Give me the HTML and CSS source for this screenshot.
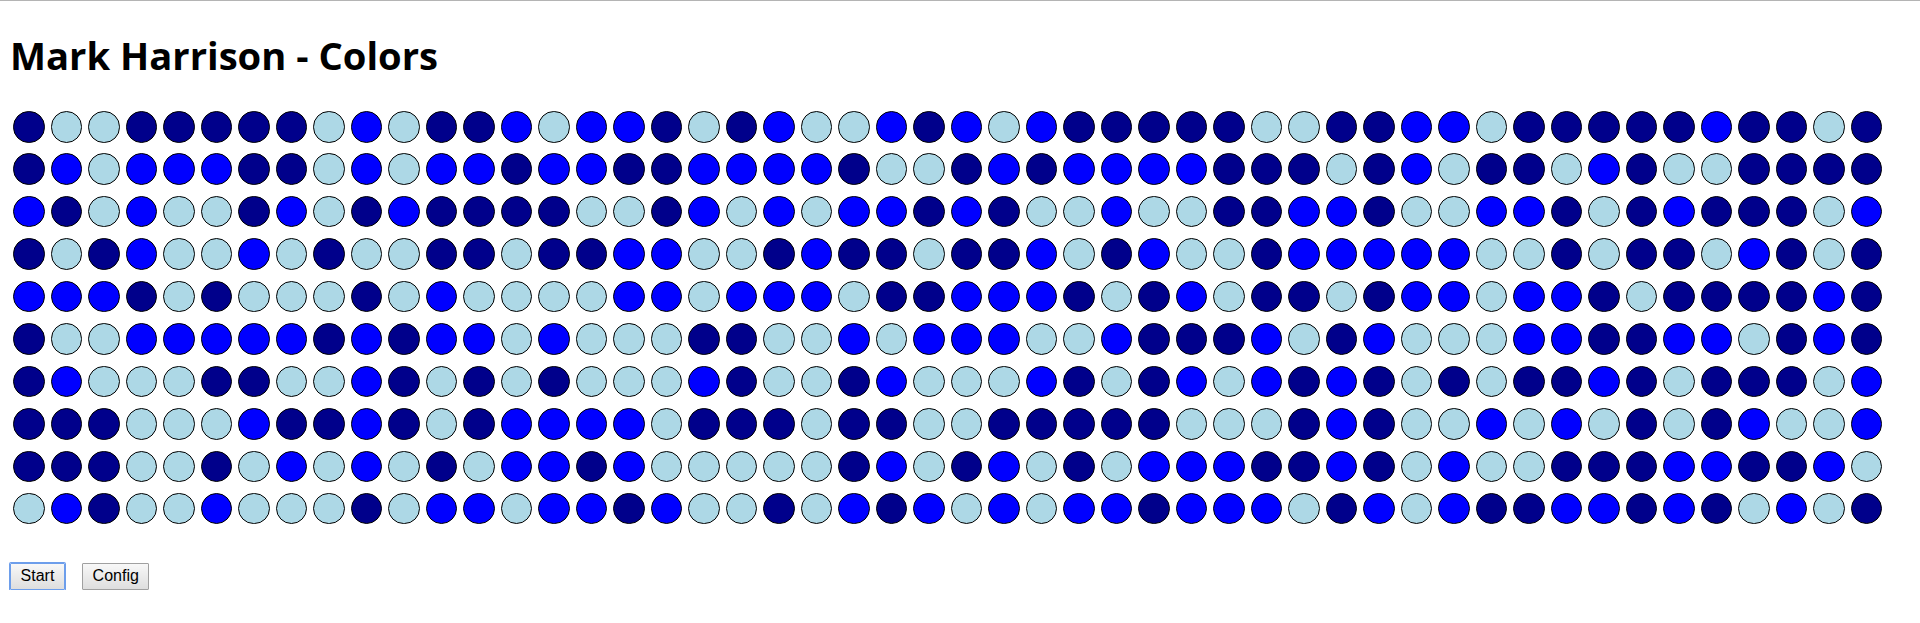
FILE: index.html
```html
<!DOCTYPE html>
<html lang="en">
<head>
    <meta charset="UTF-8">
    <title>Mark Harrison - Colors</title>
    <link rel="stylesheet" href="styles.css">
</head>
<body>
    <h1 class="title">Mark Harrison - Colors</h1>
    <div id="board" class="board"></div>
    <div class="controls">
        <button class="btn btn-focus">Start</button>
        <button class="btn">Config</button>
    </div>
    <script src="script.js"></script>
</body>
</html>
```

FILE: styles.css
```css
/* page */
body {
    margin: 0;
    border-top: 1px solid #b4b4b4;
    background: #fff;
    color: #000;
    font-family: "Open Sans", sans-serif;
}
.title {
    margin: 0;
    padding: 28px 0 0 10px;
    font-size: 38.2px;
    line-height: 52px;
    font-weight: 700;
}
/* grid of dots */
.board {
    display: grid;
    grid-template-columns: repeat(50, 37.5px);
    grid-auto-rows: 42.45px;
    padding: 30px 0 0 13px;
}
.dot {
    width: 31.5px;
    height: 31.5px;
    box-sizing: border-box;
    border: 1px solid #000;
    border-radius: 50%;
}
.navy { background: #00008b; }
.blue { background: #00f; }
.light { background: #add8e6; }
/* buttons */
.controls {
    display: flex;
    gap: 17px;
    padding: 27.5px 0 0 10px;
}
.btn {
    height: 27px;
    padding: 0 9.6px;
    border: 1px solid #a0a0a0;
    border-radius: 1px;
    background: linear-gradient(#f8f8f8, #dedede);
    color: #000;
    font-family: "Liberation Sans", Arial, sans-serif;
    font-size: 16px;
}
.btn-focus {
    border-color: #6d9eeb;
    box-shadow: 0 0 0 1px #6d9eeb;
}
```

FILE: script.js
```js
// one string per row: D = navy, B = blue, L = light
var rows = [
    "DLLDDDDDLBLDDBLBBDLDBLLBDBLBDDDDDLLDDBBLDDDDDBDDLD",
    "DBLBBBDDLBLBBDBBDDBBBBDLLDBDBBBBDDDLDBLDDLBDLLDDDD",
    "BDLBLLDBLDBDDDDLLDBLBLBBDBDLLBLLDDBBDLLBBDLDBDDDLB",
    "DLDBLLBLDLLDDLDDBBLLDBDDLDDBLDBLLDBBBBBLLDLDDLBDLD",
    "BBBDLDLLLDLBLLLLBBLBBBLDDBBBDLDBLDDLDBBLBBDLDDDDBD",
    "DLLBBBBBDBDBBLBLLLDDLLBLBBBLLBDDDBLDBLLLBBDDBBLDBD",
    "DBLLLDDLLBDLDLDLLLBDLLDBLLLBDLDBLBDBDLDLDDBDLDDDLB",
    "DDDLLLBDDBDLDBBBBLDDDLDDLLDDDDDLLLDBDLLBLBLDLDBLLB",
    "DDDLLDLBLBLDLBBDBLLLLLDBLDBLDLBBBDDBDLBLLDDDBBDDBL",
    "LBDLLBLLLDLBBLBBDBLLDLBDBLBLBBDBBBLDBLBDDBBDBDLBLD"
];
var names = { D: "navy", B: "blue", L: "light" };
var board = document.getElementById("board");

rows.forEach(function (row) {
    row.split("").forEach(function (c) {
        var dot = document.createElement("div");
        dot.className = "dot " + names[c];
        board.appendChild(dot);
    });
});
```
